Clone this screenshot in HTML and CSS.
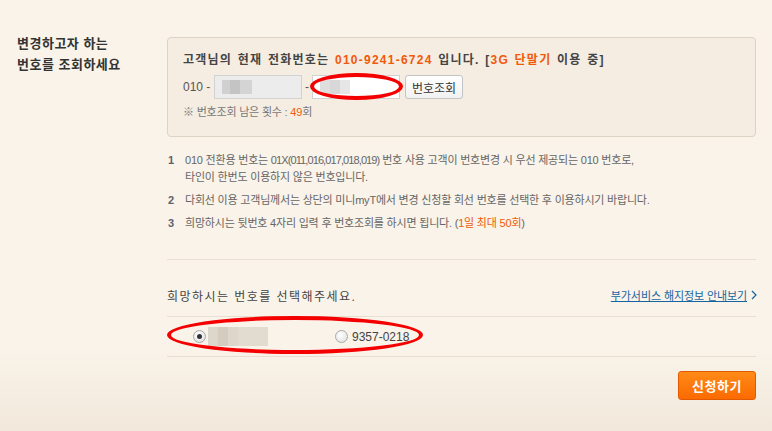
FILE: index.html
```html
<!DOCTYPE html>
<html lang="ko">
<head>
<meta charset="utf-8">
<title>번호 조회</title>
<link rel="stylesheet" href="styles.css">
</head>
<body>
<div class="page">
  <h2 class="side-title">변경하고자 하는<br>번호를 조회하세요</h2>
  <div class="main">
    <div class="box">
      <p class="current">고객님의 현재 전화번호는 <em>010-9241-6724</em> 입니다. [<em>3G 단말기</em> 이용 중]</p>
      <div class="query">
        <span class="prefix">010 -</span>
        <span class="inp inp-gray"><span class="mosaic mosaic-dark"></span></span>
        <span class="dash">-</span>
        <span class="inp inp-white"><span class="mosaic mosaic-light"></span></span>
        <button class="btn-query" type="button">번호조회</button>
        <span class="mark mark-input"></span>
      </div>
      <p class="remain">※ 번호조회 남은 횟수 : <em>49</em>회</p>
    </div>

    <ol class="notes">
      <li><span class="num">1</span><span class="txt">010 전환용 번호는 <span class="tight">01X(011,016,017,018,019)</span> 번호 사용 고객이 번호변경 시 우선 제공되는 010 번호로,<br>타인이 한번도 이용하지 않은 번호입니다.</span></li>
      <li><span class="num">2</span><span class="txt">다회선 이용 고객님께서는 상단의 미니myT에서 변경 신청할 회선 번호를 선택한 후 이용하시기 바랍니다.</span></li>
      <li><span class="num">3</span><span class="txt">희망하시는 뒷번호 4자리 입력 후 번호조회를 하시면 됩니다. (<em>1일 최대 50회</em>)</span></li>
    </ol>

    <div class="choose-head">
      <p class="choose-title">희망하시는 번호를 선택해주세요.</p>
      <a class="info-link" href="#">부가서비스 해지정보 안내보기<svg class="chev" width="6" height="10" viewBox="0 0 6 10"><path d="M1 1 L5 5 L1 9" fill="none" stroke="#16649f" stroke-width="1.2"/></svg></a>
    </div>

    <div class="choices">
      <label class="choice choice-1"><span class="radio checked"></span><span class="mosaic mosaic-beige"></span></label>
      <label class="choice choice-2"><span class="radio"></span><span class="choice-num">9357-0218</span></label>
      <span class="mark mark-choices"></span>
    </div>

    <div class="actions">
      <button class="btn-apply" type="button">신청하기</button>
    </div>
  </div>
</div>
</body>
</html>
```

FILE: styles.css
```css
html, body {
  margin: 0;
  padding: 0;
}
body {
  width: 772px;
  height: 431px;
  overflow: hidden;
  background: linear-gradient(to bottom, #f9f3e9 0, #f9f3e9 350px, #f2e8db 431px);
  font-family: "Liberation Sans", "Noto Sans CJK KR", sans-serif;
  color: #555;
}
em {
  font-style: normal;
  color: #f05a0a;
}
.page {
  display: flex;
  padding: 37px 0 0 17px;
}
.side-title {
  flex: none;
  width: 150px;
  margin: -4px 0 0 0;
  font-size: 13px;
  line-height: 21px;
  font-weight: bold;
  color: #333;
  letter-spacing: 0.5px;
}
.main {
  width: 589px;
  flex: none;
}
.box {
  box-sizing: border-box;
  height: 100px;
  border: 1px solid #ddd3c4;
  border-radius: 4px;
  background: #f5ede2;
  padding: 14px 15px 0 15px;
}
.current {
  margin: 0;
  font-size: 12px;
  line-height: 16px;
  font-weight: bold;
  color: #444;
  letter-spacing: 1.25px;
  word-spacing: 1px;
}
.query {
  position: relative;
  display: flex;
  align-items: center;
  height: 24px;
  margin-top: 7px;
  font-size: 12px;
  color: #555;
}
.prefix {
  width: 31px;
}
.inp {
  box-sizing: border-box;
  width: 88px;
  height: 24px;
  border: 1px solid #d2d2d2;
  padding: 4px 0 0 7px;
}
.inp-gray {
  background: #ececec;
}
.inp-white {
  background: #fff;
}
.dash {
  width: 10px;
  text-align: center;
}
.mosaic {
  display: block;
}
.mosaic-dark {
  width: 30px;
  height: 14px;
  background:
    linear-gradient(to right, #d0d0d0 0 8px, #c4c4c4 8px 18px, #d4d4d4 18px 30px);
}
.mosaic-light {
  width: 30px;
  height: 14px;
  background:
    linear-gradient(to right, #dedede 0 10px, #d8d8d8 10px 20px, #e6e6e6 20px 30px);
}
.btn-query {
  box-sizing: border-box;
  width: 58px;
  height: 24px;
  margin-left: 5px;
  padding: 0;
  border: 1px solid #c4c4c4;
  border-radius: 3px;
  background: linear-gradient(to bottom, #ffffff, #f1f1f1);
  font-family: inherit;
  font-size: 12px;
  color: #333;
}
.mark {
  position: absolute;
  box-sizing: border-box;
  border: 4px solid #f40000;
  border-radius: 50%;
}
.mark-input {
  left: 127px;
  top: -2px;
  width: 93px;
  height: 27px;
}
.remain {
  margin: 6px 0 0 0;
  font-size: 11px;
  line-height: 14px;
  color: #777;
  letter-spacing: -0.2px;
}
.notes {
  list-style: none;
  margin: 15px 0 0 0;
  padding: 0;
  font-size: 11px;
  line-height: 17px;
  color: #666;
}
.notes li {
  display: flex;
  margin-bottom: 6px;
}
.num {
  flex: none;
  width: 17px;
  padding-left: 1px;
  font-weight: bold;
  color: #5b6272;
}
.txt {
  letter-spacing: -0.2px;
}
.tight {
  letter-spacing: -0.9px;
}
.choose-head {
  display: flex;
  justify-content: space-between;
  align-items: center;
  border-top: 1px solid #e8dfd2;
  margin-top: 27px;
  padding-top: 26px;
  height: 18px;
}
.choose-title {
  margin: 0;
  font-size: 12px;
  color: #444;
  letter-spacing: 1.45px;
}
.info-link {
  display: flex;
  align-items: center;
  gap: 4px;
  font-size: 11px;
  color: #16649f;
  text-decoration: underline;
  letter-spacing: -0.1px;
  margin-right: -1px;
}
.choices {
  position: relative;
  display: flex;
  align-items: center;
  height: 39px;
  margin-top: 12px;
  border-top: 1px solid #e8dfd2;
  border-bottom: 1px solid #e8dfd2;
}
.choice {
  display: flex;
  align-items: center;
}
.choice-1 {
  margin-left: 26px;
  width: 142px;
}
.radio {
  box-sizing: border-box;
  width: 13px;
  height: 13px;
  border: 1px solid #a9a9a9;
  border-radius: 50%;
  background: radial-gradient(circle at 40% 35%, #ffffff, #dcdcdc);
  display: flex;
  align-items: center;
  justify-content: center;
}
.radio.checked::after {
  content: "";
  width: 5px;
  height: 5px;
  border-radius: 50%;
  background: #333;
}
.mosaic-beige {
  width: 60px;
  height: 19px;
  margin-left: 2px;
  background:
    linear-gradient(to right, #ddd6ca 0 10px, #d3ccbf 10px 20px, #ddd6ca 20px 30px, #e2dcd0 30px 60px);
}
.choice-num {
  margin-left: 4px;
  font-size: 12px;
  color: #444;
}
.mark-choices {
  left: 0;
  top: -1px;
  width: 256px;
  height: 38px;
}
.actions {
  display: flex;
  justify-content: flex-end;
  margin-top: 14px;
}
.btn-apply {
  box-sizing: border-box;
  width: 78px;
  height: 29px;
  padding: 0;
  border: 1px solid #e25a00;
  border-radius: 3px;
  background: linear-gradient(to bottom, #ff8a18, #fb6a00);
  font-family: inherit;
  font-size: 13px;
  font-weight: bold;
  color: #fff;
  letter-spacing: 0.5px;
}
```
